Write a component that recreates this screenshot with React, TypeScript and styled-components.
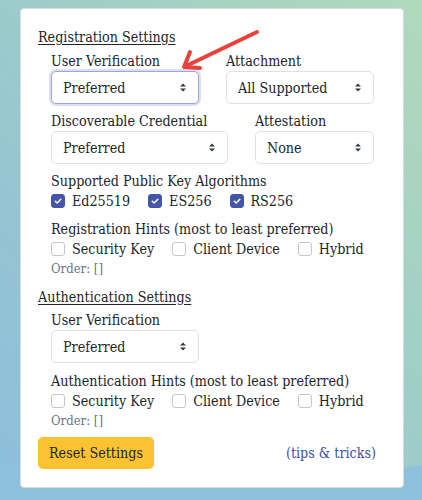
import React from "react"
import styled, { createGlobalStyle } from "styled-components"

const GlobalStyle = createGlobalStyle`
  html, body {
    margin: 0;
    padding: 0;
  }
  body {
    background: linear-gradient(to bottom left, #b0dabb 0%, #a0cec7 40%, #93c3d4 75%, #8dbedc 100%);
    font-family: "DejaVu Serif", "Liberation Serif", serif;
    font-stretch: condensed;
    font-size: 14.2px;
    color: #212529;
    overflow: hidden;
  }
`

const Page = styled.div`
  position: relative;
  height: 500px;
  padding: 8px 18px 0 20px;
  box-sizing: border-box;
`

const Wave = styled.svg`
  position: absolute;
  left: 0;
  bottom: 0;
  width: 422px;
  height: 60px;
`

const Pointer = styled.svg`
  position: absolute;
  left: 0;
  top: 0;
  width: 422px;
  height: 120px;
  pointer-events: none;
  z-index: 2;
`

const Card = styled.div`
  position: relative;
  z-index: 1;
  width: 384px;
  height: 480px;
  box-sizing: border-box;
  background: #fff;
  border: 1px solid #d9dcdf;
  border-radius: 4px;
  padding: 17px;
  display: flex;
  flex-direction: column;
`

const SectionTitle = styled.div<{ $top?: number }>`
  line-height: 22px;
  margin-top: ${(p) => p.$top ?? 0}px;
  text-decoration: underline;
  text-underline-offset: 2px;
`

const Group = styled.div`
  padding-left: 13px;
  display: flex;
  flex-direction: column;
`

const FieldRow = styled.div<{ $top?: number }>`
  display: flex;
  gap: 27px;
  margin-top: ${(p) => p.$top ?? 0}px;
`

const Field = styled.div`
  display: flex;
  flex-direction: column;
`

const Label = styled.div<{ $top?: number }>`
  line-height: 20px;
  margin-top: ${(p) => p.$top ?? 0}px;
  white-space: nowrap;
`

const SelectBox = styled.div<{ $width: number; $focused?: boolean }>`
  width: ${(p) => p.$width}px;
  height: 33px;
  box-sizing: border-box;
  display: flex;
  align-items: center;
  justify-content: space-between;
  padding: 0 11px;
  background: #fff;
  border: 1px solid ${(p) => (p.$focused ? "#9aa6dc" : "#dee2e6")};
  border-radius: 5px;
  box-shadow: ${(p) => (p.$focused ? "0 0 0 2px rgba(63, 81, 181, 0.18)" : "none")};
`

const CheckRow = styled.div`
  display: flex;
  gap: 18px;
  height: 20px;
  align-items: center;
`

const CheckItem = styled.label`
  display: flex;
  align-items: center;
  gap: 7px;
  line-height: 20px;
  white-space: nowrap;
`

const Box = styled.span<{ $checked?: boolean }>`
  width: 14px;
  height: 14px;
  box-sizing: border-box;
  border-radius: 3px;
  display: inline-flex;
  align-items: center;
  justify-content: center;
  background: ${(p) => (p.$checked ? "#4456a8" : "#fff")};
  border: 1px solid ${(p) => (p.$checked ? "#4456a8" : "#c3c7cc")};
`

const Order = styled.div`
  font-size: 13px;
  line-height: 20px;
  color: #6c757d;
`

const Footer = styled.div`
  display: flex;
  align-items: center;
  justify-content: space-between;
  margin-top: 6px;
  padding-right: 10px;
`

const ResetButton = styled.button`
  height: 32px;
  padding: 0 11px;
  border: none;
  border-radius: 5px;
  background: #fbc332;
  color: #212529;
  font-family: inherit;
  font-stretch: condensed;
  font-size: 14.2px;
`

const TipsLink = styled.a`
  color: #3d50a8;
  text-decoration: none;
`

const Caret = () => (
  <svg width="8" height="11" viewBox="0 0 8 11">
    <path d="M1 4.5 L4 1.5 L7 4.5 Z M1 6.5 L4 9.5 L7 6.5 Z" fill="#343a40" />
  </svg>
)

const Select = ({ value, width, focused }: { value: string; width: number; focused?: boolean }) => (
  <SelectBox $width={width} $focused={focused}>
    <span>{value}</span>
    <Caret />
  </SelectBox>
)

const Check = ({ label, checked }: { label: string; checked?: boolean }) => (
  <CheckItem>
    <Box $checked={checked}>
      {checked && (
        <svg width="10" height="10" viewBox="0 0 10 10">
          <path d="M2.3 5.2 L4.2 7 L7.8 3.2" fill="none" stroke="#fff" strokeWidth="1.5" strokeLinecap="round" strokeLinejoin="round" />
        </svg>
      )}
    </Box>
    {label}
  </CheckItem>
)

const hints = ["Security Key", "Client Device", "Hybrid"]

export default function App() {
  return (
    <>
      <GlobalStyle />
      <Page>
        <Wave viewBox="0 0 422 60" preserveAspectRatio="none">
          <path d="M0 60 L0 20 Q 180 62 422 25 L422 60 Z" fill="#8ec0dc" />
        </Wave>
        <Card>
          <SectionTitle>Registration Settings</SectionTitle>
          <Group>
            <FieldRow $top={3}>
              <Field>
                <Label>User Verification</Label>
                <Select value="Preferred" width={148} focused />
              </Field>
              <Field>
                <Label>Attachment</Label>
                <Select value="All Supported" width={148} />
              </Field>
            </FieldRow>
            <FieldRow $top={7}>
              <Field>
                <Label>Discoverable Credential</Label>
                <Select value="Preferred" width={177} />
              </Field>
              <Field>
                <Label>Attestation</Label>
                <Select value="None" width={119} />
              </Field>
            </FieldRow>
            <Label $top={7}>Supported Public Key Algorithms</Label>
            <CheckRow>
              <Check label="Ed25519" checked />
              <Check label="ES256" checked />
              <Check label="RS256" checked />
            </CheckRow>
            <Label $top={8}>Registration Hints (most to least preferred)</Label>
            <CheckRow>
              {hints.map((h) => (
                <Check key={h} label={h} />
              ))}
            </CheckRow>
            <Order>Order: []</Order>
          </Group>
          <SectionTitle $top={7}>Authentication Settings</SectionTitle>
          <Group>
            <Label $top={2}>User Verification</Label>
            <Select value="Preferred" width={148} />
            <Label $top={8}>Authentication Hints (most to least preferred)</Label>
            <CheckRow>
              {hints.map((h) => (
                <Check key={h} label={h} />
              ))}
            </CheckRow>
            <Order>Order: []</Order>
          </Group>
          <Footer>
            <ResetButton>Reset Settings</ResetButton>
            <TipsLink href="#">(tips &amp; tricks)</TipsLink>
          </Footer>
        </Card>
        <Pointer viewBox="0 0 422 120">
          <g fill="none" stroke="#e8423a" strokeWidth="4" strokeLinecap="round" strokeLinejoin="round">
            <path d="M257 32 L186 66" />
            <path d="M190 52 L184 67 L200 68" />
          </g>
        </Pointer>
      </Page>
    </>
  )
}
